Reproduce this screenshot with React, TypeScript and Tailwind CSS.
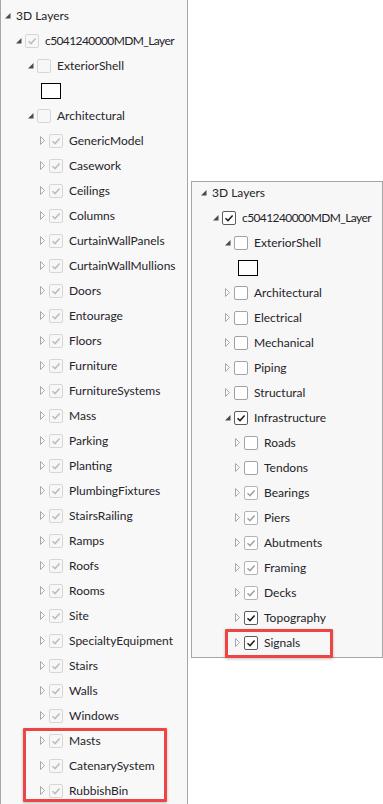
import React from "react";

type Check = "none" | "dimOn" | "dimOff" | "off" | "on" | "grayOn";
type Row = {
  label?: string;
  level: number;
  exp: "open" | "closed" | "none";
  check: Check;
  swatch?: boolean;
  tight?: boolean;
};

const FONT = { fontFamily: 'Lato, "Noto Sans", sans-serif' };

function Expander({ exp }: { exp: Row["exp"] }) {
  if (exp === "open") {
    return (
      <svg width="12" height="25" viewBox="0 0 12 25" className="shrink-0">
        <path d="M8.5 10 L8.5 15.5 L3 15.5 Z" fill="#4a4a4a" />
      </svg>
    );
  }
  if (exp === "closed") {
    return (
      <svg width="12" height="25" viewBox="0 0 12 25" className="shrink-0">
        <path d="M3.5 8.5 L7.5 12.5 L3.5 16.5 Z" fill="#fafafa" stroke="#a8a8a8" strokeWidth="1" />
      </svg>
    );
  }
  return <span className="w-[12px] shrink-0" />;
}

function Box({ check }: { check: Check }) {
  const styles: Record<string, string> = {
    dimOn: "border-[#d6d6d6] bg-[#f7f7f7]",
    dimOff: "border-[#d6d6d6] bg-[#f7f7f7]",
    off: "border-[#a3a3a3] bg-white",
    on: "border-[#5c5c5c] bg-white",
    grayOn: "border-[#b4b4b4] bg-white",
  };
  const tick: Record<string, string> = {
    dimOn: "#bdbdbd",
    on: "#1f1f1f",
    grayOn: "#a2a2a2",
  };
  return (
    <span
      className={`w-[14px] h-[14px] shrink-0 rounded-[2px] border flex items-center justify-center ${styles[check]}`}
    >
      {tick[check] && (
        <svg width="12" height="12" viewBox="0 0 12 12">
          <path
            d="M2.5 6.2 L5 8.6 L9.6 3.4"
            fill="none"
            stroke={tick[check]}
            strokeWidth="1.5"
          />
        </svg>
      )}
    </span>
  );
}

function TreeRow({ row, pads }: { row: Row; pads: number[] }) {
  if (row.swatch) {
    return (
      <div className="h-[25px] flex items-center" style={{ paddingLeft: pads[row.level] + 16 }}>
        <span className="w-[20px] h-[16px] border-[1.5px] border-black bg-white" />
      </div>
    );
  }
  return (
    <div
      className="h-[25px] flex items-center text-[12px] text-[#27232a] whitespace-nowrap"
      style={{ paddingLeft: pads[row.level] }}
    >
      <Expander exp={row.exp} />
      {row.check === "none" ? (
        <span className="ml-[2px]">{row.label}</span>
      ) : (
        <>
          <Box check={row.check} />
          <span className={row.tight ? "ml-[6px] tracking-[-0.6px]" : "ml-[6px]"}>{row.label}</span>
        </>
      )}
    </div>
  );
}

const leftChildren = [
  "GenericModel",
  "Casework",
  "Ceilings",
  "Columns",
  "CurtainWallPanels",
  "CurtainWallMullions",
  "Doors",
  "Entourage",
  "Floors",
  "Furniture",
  "FurnitureSystems",
  "Mass",
  "Parking",
  "Planting",
  "PlumbingFixtures",
  "StairsRailing",
  "Ramps",
  "Roofs",
  "Rooms",
  "Site",
  "SpecialtyEquipment",
  "Stairs",
  "Walls",
  "Windows",
  "Masts",
  "CatenarySystem",
  "RubbishBin",
];

const leftRows: Row[] = [
  { label: "3D Layers", level: 0, exp: "open", check: "none" },
  { label: "c5041240000MDM_Layer", level: 1, exp: "open", check: "dimOn", tight: true },
  { label: "ExteriorShell", level: 2, exp: "open", check: "dimOff" },
  { level: 2, exp: "none", check: "none", swatch: true },
  { label: "Architectural", level: 2, exp: "open", check: "dimOff" },
  ...leftChildren.map((l) => ({ label: l, level: 3, exp: "closed" as const, check: "dimOn" as Check })),
];

const rightRows: Row[] = [
  { label: "3D Layers", level: 0, exp: "open", check: "none" },
  { label: "c5041240000MDM_Layer", level: 1, exp: "open", check: "on", tight: true },
  { label: "ExteriorShell", level: 2, exp: "open", check: "off" },
  { level: 2, exp: "none", check: "none", swatch: true },
  ...["Architectural", "Electrical", "Mechanical", "Piping", "Structural"].map((l) => ({
    label: l,
    level: 2,
    exp: "closed" as const,
    check: "off" as Check,
  })),
  { label: "Infrastructure", level: 2, exp: "open", check: "on" },
  ...["Roads", "Tendons"].map((l) => ({ label: l, level: 3, exp: "closed" as const, check: "off" as Check })),
  ...["Bearings", "Piers", "Abutments", "Framing", "Decks"].map((l) => ({
    label: l,
    level: 3,
    exp: "closed" as const,
    check: "grayOn" as Check,
  })),
  ...["Topography", "Signals"].map((l) => ({ label: l, level: 3, exp: "closed" as const, check: "on" as Check })),
];

export default function App() {
  return (
    <div className="w-[383px] h-[804px] bg-white flex items-start gap-[3px] overflow-hidden" style={FONT}>
      {/* Left layer tree */}
      <div className="relative w-[188px] h-[804px] shrink-0 border-x border-[#a6a6a6] bg-[#f8f8f8] pt-[3px]">
        {leftRows.map((r, i) => (
          <TreeRow key={i} row={r} pads={[1, 12, 24, 36]} />
        ))}
        <div className="absolute left-[22px] top-[728px] w-[144px] h-[74px] border-[3px] border-[#ef4444] rounded-[1px] shadow-[0_1px_3px_rgba(0,0,0,0.25)]" />
      </div>

      {/* Right layer tree */}
      <div className="relative mt-[181px] w-[192px] h-[477px] shrink-0 border border-[#a6a6a6] bg-[#f6f7f6]">
        <div className="-mt-[2px]">
          {rightRows.map((r, i) => (
            <TreeRow key={i} row={r} pads={[6, 18, 30, 40]} />
          ))}
        </div>
        <div className="absolute left-[33px] top-[447px] w-[108px] h-[29px] border-[3px] border-[#ef4444] rounded-[1px] shadow-[0_1px_3px_rgba(0,0,0,0.25)]" />
      </div>
    </div>
  );
}
